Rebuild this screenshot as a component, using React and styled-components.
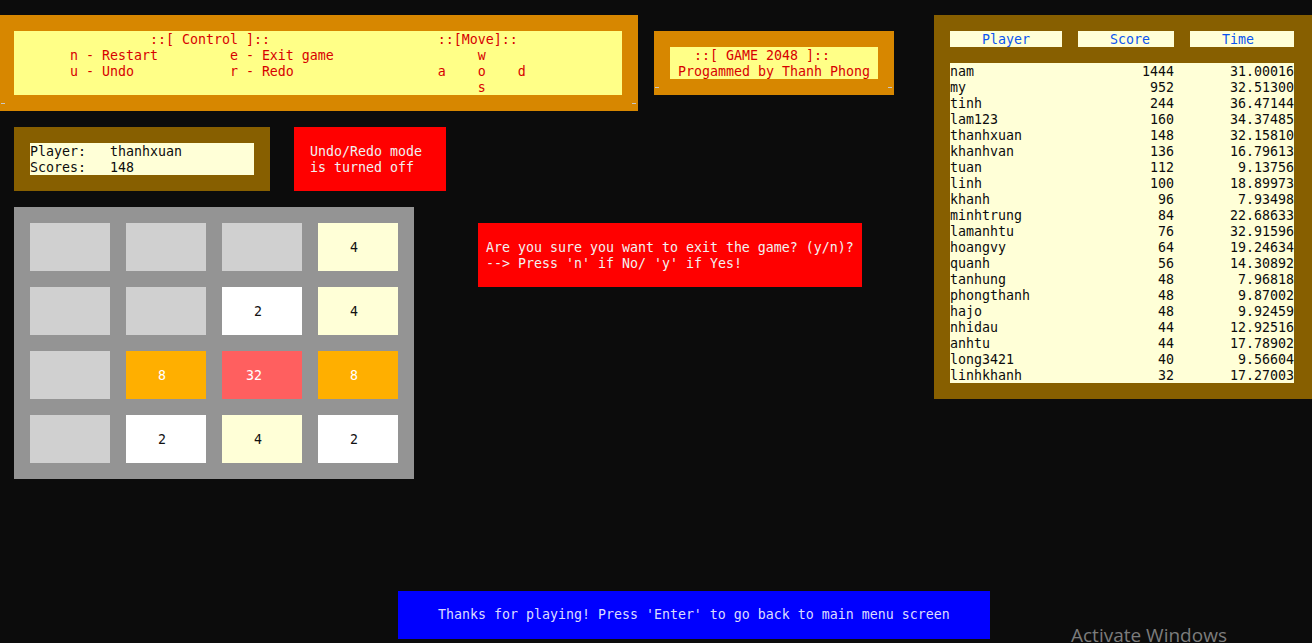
import styled, { createGlobalStyle, css } from 'styled-components'

/* --- Console palette --- */
const C = {
  bg: '#0c0c0c',
  orange: '#d78700',
  yellow: '#ffff87',
  brown: '#875f00',
  cream: '#ffffd7',
  red: '#ff0000',
  textRed: '#d70000',
  board: '#949494',
  empty: '#d0d0d0',
  blue: '#0000ff',
}

const GlobalStyle = createGlobalStyle`
  html, body {
    margin: 0;
    padding: 0;
    background: ${C.bg};
  }
  body {
    font-family: 'DejaVu Sans Mono', 'Liberation Mono', monospace;
    font-size: 13.29px;
    line-height: 18px;
  }
`

/* build a console line from [column, text] pairs */
const at = (...pairs) => {
  let out = ''
  pairs.forEach(([col, text]) => {
    out = out.padEnd(col, ' ') + text
  })
  return out
}

/* --- Layout --- */
const Screen = styled.div`
  position: relative;
  width: 1312px;
  height: 643px;
  overflow: hidden;
  display: flex;
  padding-top: 15px;
  box-sizing: border-box;
  gap: 40px;
`

const LeftArea = styled.div`
  width: 894px;
  flex-shrink: 0;
  display: flex;
  flex-direction: column;
`

const Row = styled.div`
  display: flex;
  align-items: flex-start;
  gap: ${(p) => p.$gap || 0}px;
  margin-top: ${(p) => p.$top || 0}px;
  margin-left: ${(p) => p.$left || 0}px;
`

const Line = styled.div`
  white-space: pre;
  height: 16px;
`

/* --- Framed boxes --- */
const marks = css`
  &::before,
  &::after {
    content: '';
    position: absolute;
    bottom: ${(p) => p.$markBottom}px;
    width: 4px;
    height: 1px;
    background: #c8c8c8;
  }
  &::before {
    left: 1px;
  }
  &::after {
    right: 2px;
  }
`

const ControlPanel = styled.div`
  position: relative;
  width: 638px;
  height: 96px;
  box-sizing: border-box;
  padding: 16px 0 0 14px;
  background: ${C.orange};
  ${marks}
`

const ControlInner = styled.div`
  width: 608px;
  height: 64px;
  background: ${C.yellow};
  color: ${C.textRed};
`

const TitleBox = styled.div`
  position: relative;
  width: 240px;
  height: 64px;
  margin-top: 16px;
  box-sizing: border-box;
  padding: 16px 16px;
  background: ${C.orange};
  ${marks}
`

const TitleInner = styled.div`
  width: 208px;
  height: 32px;
  background: ${C.yellow};
  color: ${C.textRed};
`

const PlayerBox = styled.div`
  width: 256px;
  height: 64px;
  box-sizing: border-box;
  padding: 16px;
  background: ${C.brown};
`

const PlayerInner = styled.div`
  width: 224px;
  height: 32px;
  background: ${C.cream};
  color: #0c0c0c;
`

const Alert = styled.div`
  width: ${(p) => p.$w}px;
  height: 64px;
  box-sizing: border-box;
  padding: 16px ${(p) => p.$pad}px;
  margin-top: ${(p) => p.$top || 0}px;
  background: ${C.red};
  color: #f2f2f2;
`

/* --- 2048 board --- */
const Board = styled.div`
  width: 400px;
  height: 272px;
  box-sizing: border-box;
  padding: 16px;
  background: ${C.board};
  display: grid;
  grid-template-columns: repeat(4, 80px);
  grid-auto-rows: 48px;
  gap: 16px;
`

const tileColors = {
  0: [C.empty, 'transparent'],
  2: ['#ffffff', '#121212'],
  4: [C.cream, '#121212'],
  8: ['#ffaf00', '#ffffff'],
  32: ['#ff5f5f', '#ffffff'],
}

const Tile = styled.div`
  padding-top: 16px;
  box-sizing: border-box;
  white-space: pre;
  background: ${(p) => tileColors[p.$v][0]};
  color: ${(p) => tileColors[p.$v][1]};
`

const board = [
  [0, 0, 0, 4],
  [0, 0, 2, 4],
  [0, 8, 32, 8],
  [0, 2, 4, 2],
]

/* --- Leaderboard --- */
const Leaderboard = styled.div`
  width: 378px;
  height: 384px;
  flex-shrink: 0;
  box-sizing: border-box;
  padding: 16px 0 0 16px;
  background: ${C.brown};
`

const HeaderRow = styled.div`
  display: flex;
  gap: 16px;
  margin-bottom: 16px;
`

const HeaderCell = styled.div`
  width: ${(p) => p.$w}px;
  height: 16px;
  padding-left: 32px;
  box-sizing: border-box;
  background: ${C.cream};
  color: #0a55f0;
`

const ScoreList = styled.div`
  width: 344px;
  height: 320px;
  background: ${C.cream};
  color: #0c0c0c;
  display: grid;
  grid-template-columns: 160px 64px 120px;
  grid-auto-rows: 16px;
`

const Cell = styled.div`
  white-space: pre;
  text-align: ${(p) => (p.$right ? 'right' : 'left')};
`

const scores = [
  ['nam', 1444, '31.00016'],
  ['my', 952, '32.51300'],
  ['tinh', 244, '36.47144'],
  ['lam123', 160, '34.37485'],
  ['thanhxuan', 148, '32.15810'],
  ['khanhvan', 136, '16.79613'],
  ['tuan', 112, '9.13756'],
  ['linh', 100, '18.89973'],
  ['khanh', 96, '7.93498'],
  ['minhtrung', 84, '22.68633'],
  ['lamanhtu', 76, '32.91596'],
  ['hoangvy', 64, '19.24634'],
  ['quanh', 56, '14.30892'],
  ['tanhung', 48, '7.96818'],
  ['phongthanh', 48, '9.87002'],
  ['hajo', 48, '9.92459'],
  ['nhidau', 44, '12.92516'],
  ['anhtu', 44, '17.78902'],
  ['long3421', 40, '9.56604'],
  ['linhkhanh', 32, '17.27003'],
]

/* --- Footer --- */
const FooterBar = styled.div`
  width: 592px;
  height: 48px;
  box-sizing: border-box;
  margin: 112px 0 0 398px;
  padding: 15px 0 0 40px;
  background: ${C.blue};
  color: #dcdcff;
  white-space: pre;
`

const Watermark = styled.div`
  position: absolute;
  left: 1071px;
  top: 622px;
  font-family: 'Open Sans', 'Noto Sans', sans-serif;
  font-size: 19px;
  line-height: 27px;
  color: #7c7c7c;
  white-space: nowrap;
`

export default function App() {
  return (
    <>
      <GlobalStyle />
      <Screen>
        <LeftArea>
          <Row $gap={16}>
            <ControlPanel $markBottom={7}>
              <ControlInner>
                <Line>{at([17, '::[ Control ]::'], [53, '::[Move]::'])}</Line>
                <Line>{at([7, 'n - Restart'], [27, 'e - Exit game'], [58, 'w'])}</Line>
                <Line>{at([7, 'u - Undo'], [27, 'r - Redo'], [53, 'a'], [58, 'o'], [63, 'd'])}</Line>
                <Line>{at([58, 's'])}</Line>
              </ControlInner>
            </ControlPanel>
            <TitleBox $markBottom={7}>
              <TitleInner>
                <Line>{at([3, '::[ GAME 2048 ]::'])}</Line>
                <Line>{at([1, 'Progammed by Thanh Phong'])}</Line>
              </TitleInner>
            </TitleBox>
          </Row>

          <Row $gap={24} $top={16} $left={14}>
            <PlayerBox>
              <PlayerInner>
                <Line>{at([0, 'Player:'], [10, 'thanhxuan'])}</Line>
                <Line>{at([0, 'Scores:'], [10, '148'])}</Line>
              </PlayerInner>
            </PlayerBox>
            <Alert $w={152} $pad={16}>
              <Line>Undo/Redo mode</Line>
              <Line>is turned off</Line>
            </Alert>
          </Row>

          <Row $gap={64} $top={16} $left={14}>
            <Board>
              {board.flat().map((v, i) => (
                <Tile key={i} $v={v}>
                  {v ? String(v).padStart(5, ' ') : ''}
                </Tile>
              ))}
            </Board>
            <Alert $w={384} $pad={8} $top={16}>
              <Line>Are you sure you want to exit the game? (y/n)?</Line>
              <Line>{"--> Press 'n' if No/ 'y' if Yes!"}</Line>
            </Alert>
          </Row>

          <FooterBar>
            Thanks for playing! Press 'Enter' to go back to main menu screen
          </FooterBar>
        </LeftArea>

        <Leaderboard>
          <HeaderRow>
            <HeaderCell $w={112}>Player</HeaderCell>
            <HeaderCell $w={96}>Score</HeaderCell>
            <HeaderCell $w={104}>Time</HeaderCell>
          </HeaderRow>
          <ScoreList>
            {scores.map(([name, score, time]) => [
              <Cell key={name + 'n'}>{name}</Cell>,
              <Cell key={name + 's'} $right>{score}</Cell>,
              <Cell key={name + 't'} $right>{time}</Cell>,
            ])}
          </ScoreList>
        </Leaderboard>

        <Watermark>Activate Windows</Watermark>
      </Screen>
    </>
  )
}
